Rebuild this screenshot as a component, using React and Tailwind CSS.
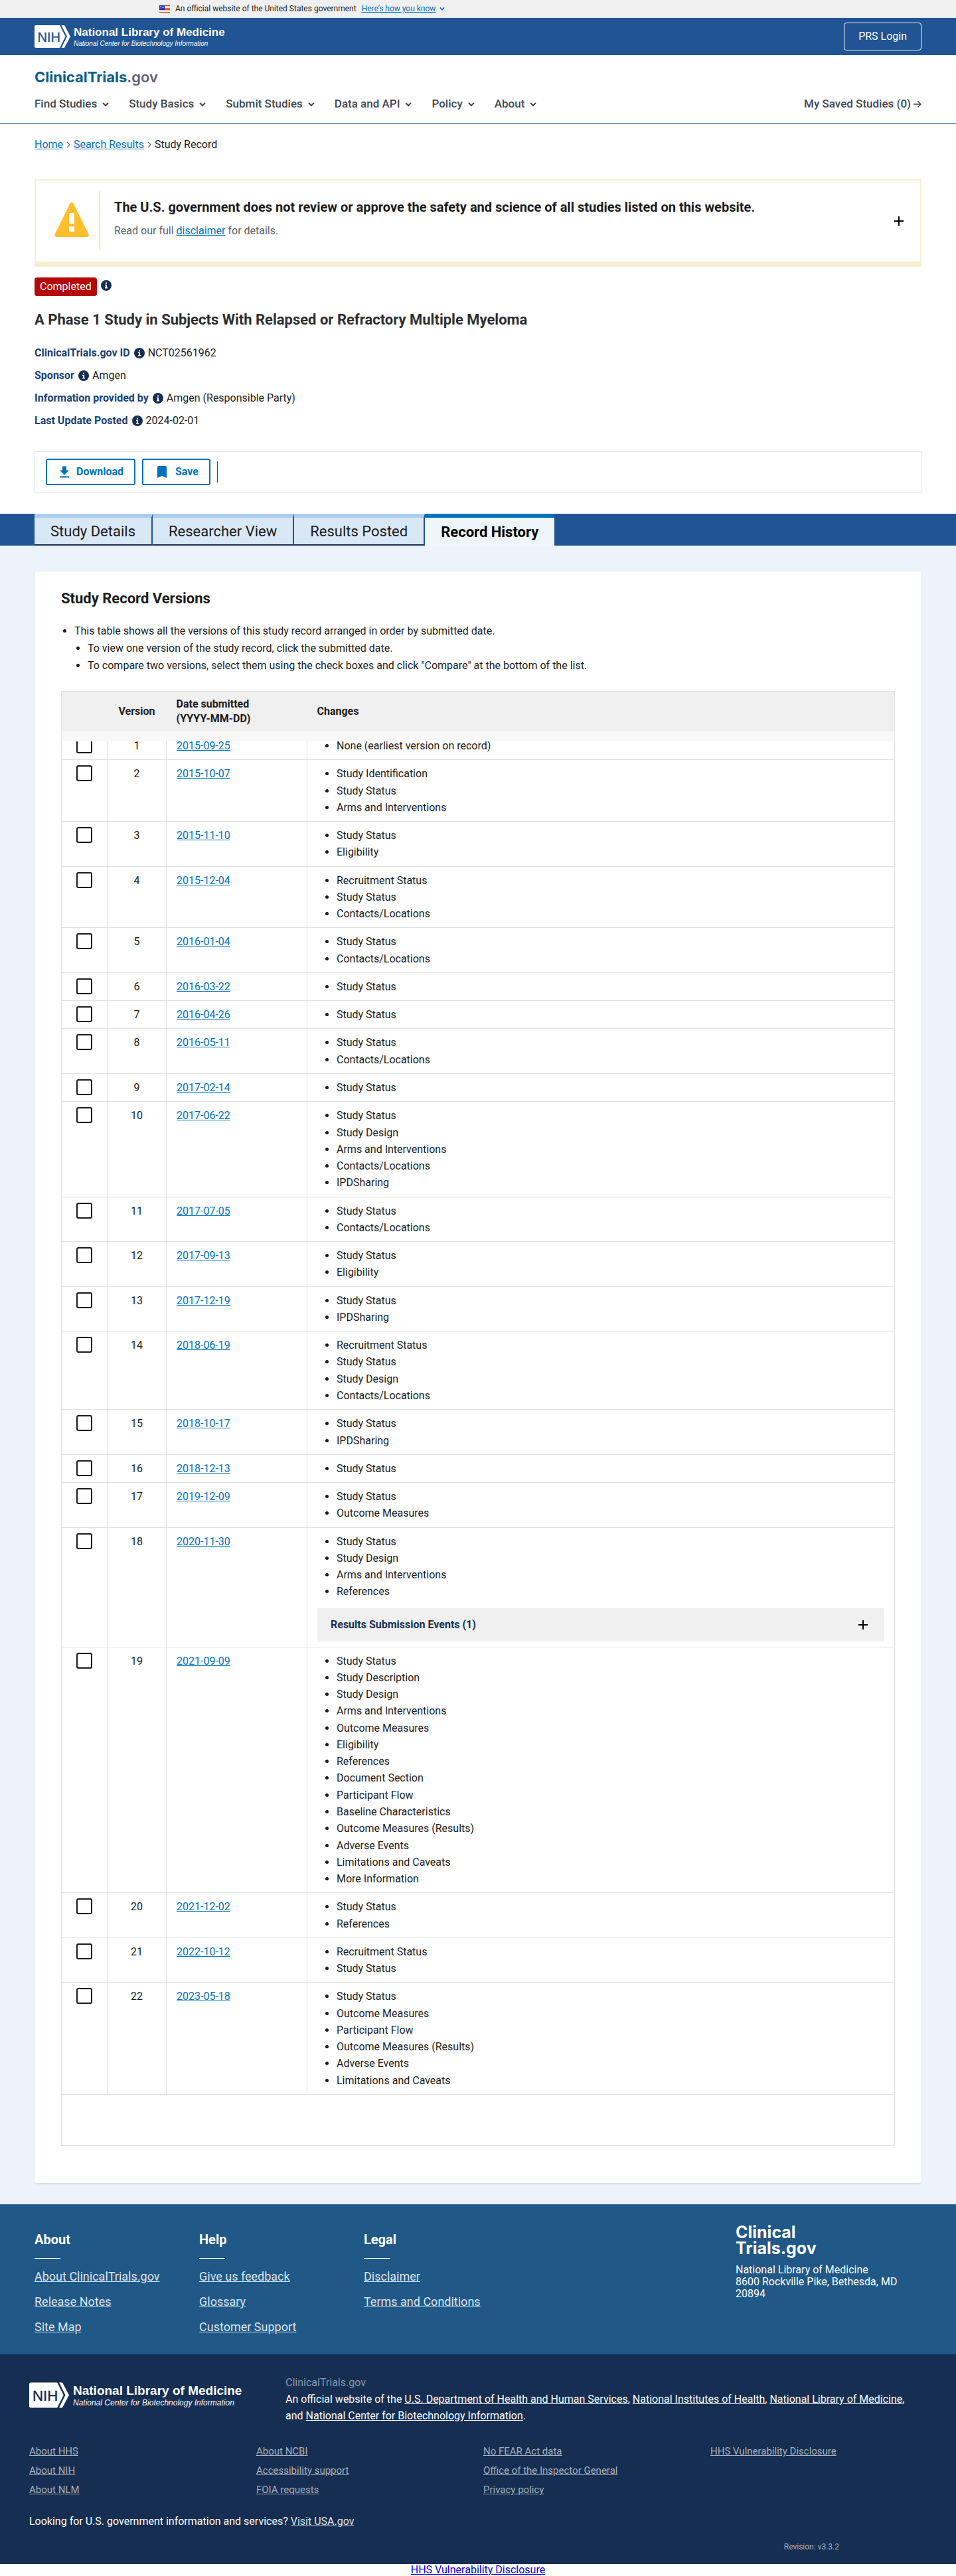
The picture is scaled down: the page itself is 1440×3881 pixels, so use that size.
import React from "react";

const NAV = ["Find Studies", "Study Basics", "Submit Studies", "Data and API", "Policy", "About"];

const S = "Study Status";
const C = "Contacts/Locations";
const A = "Arms and Interventions";

const VERSIONS = [
  ["2015-09-25", ["None (earliest version on record)"]],
  ["2015-10-07", ["Study Identification", S, A]],
  ["2015-11-10", [S, "Eligibility"]],
  ["2015-12-04", ["Recruitment Status", S, C]],
  ["2016-01-04", [S, C]],
  ["2016-03-22", [S]],
  ["2016-04-26", [S]],
  ["2016-05-11", [S, C]],
  ["2017-02-14", [S]],
  ["2017-06-22", [S, "Study Design", A, C, "IPDSharing"]],
  ["2017-07-05", [S, C]],
  ["2017-09-13", [S, "Eligibility"]],
  ["2017-12-19", [S, "IPDSharing"]],
  ["2018-06-19", ["Recruitment Status", S, "Study Design", C]],
  ["2018-10-17", [S, "IPDSharing"]],
  ["2018-12-13", [S]],
  ["2019-12-09", [S, "Outcome Measures"]],
  ["2020-11-30", [S, "Study Design", A, "References"], "Results Submission Events (1)"],
  [
    "2021-09-09",
    [
      S, "Study Description", "Study Design", A, "Outcome Measures", "Eligibility", "References",
      "Document Section", "Participant Flow", "Baseline Characteristics", "Outcome Measures (Results)",
      "Adverse Events", "Limitations and Caveats", "More Information",
    ],
  ],
  ["2021-12-02", [S, "References"]],
  ["2022-10-12", ["Recruitment Status", S]],
  [
    "2023-05-18",
    [S, "Outcome Measures", "Participant Flow", "Outcome Measures (Results)", "Adverse Events", "Limitations and Caveats"],
  ],
];

const FACTS = [
  ["ClinicalTrials.gov ID", "NCT02561962"],
  ["Sponsor", "Amgen"],
  ["Information provided by", "Amgen (Responsible Party)"],
  ["Last Update Posted", "2024-02-01"],
];

const FOOTER = [
  ["About", ["About ClinicalTrials.gov", "Release Notes", "Site Map"]],
  ["Help", ["Give us feedback", "Glossary", "Customer Support"]],
  ["Legal", ["Disclaimer", "Terms and Conditions"]],
];

const AGENCY = [
  ["About HHS", "About NIH", "About NLM"],
  ["About NCBI", "Accessibility support", "FOIA requests"],
  ["No FEAR Act data", "Office of the Inspector General", "Privacy policy"],
  ["HHS Vulnerability Disclosure"],
];

function Chevron({ className }) {
  return (
    <svg viewBox="0 0 10 10" className={className} fill="none" stroke="currentColor" strokeWidth="2" aria-hidden="true">
      <path d="M1 3l4 4 4-4" />
    </svg>
  );
}

function Plus() {
  return (
    <svg viewBox="0 0 14 14" className="size-3.5 shrink-0 text-black" fill="none" stroke="currentColor" strokeWidth="2" aria-hidden="true">
      <path d="M7 0v14M0 7h14" />
    </svg>
  );
}

function Info({ label }) {
  return (
    <button type="button" aria-label={label} className="size-4 shrink-0">
      <svg viewBox="0 0 16 16" className="size-4" aria-hidden="true">
        <circle cx="8" cy="8" r="8" fill="#162e51" />
        <path fill="#fff" d="M7 3.6h2v2H7zM6 6.7h3v4.4h1v1.3H6v-1.3h1V8H6z" />
      </svg>
    </button>
  );
}

function NihMark({ className, ink }) {
  return (
    <svg viewBox="0 0 54 34" className={className} aria-hidden="true">
      <path fill="#fff" d="M2 0h36l8.500 17L38 34H2a2 2 0 0 1-2-2V2a2 2 0 0 1 2-2z" />
      <path fill="#fff" d="M40.500 0h4.500l9 17-9 17h-4.500l8.500-17z" />
      <text x="4.500" y="24.500" fontFamily="Liberation Sans, Arial, sans-serif" fontSize="20" fill={ink} stroke={ink} strokeWidth="0.400">
        NIH
      </text>
    </svg>
  );
}

function Flag() {
  return (
    <svg viewBox="0 0 16 11" className="h-[11px] w-4" aria-hidden="true">
      <path fill="#fff" d="M0 0h16v11H0z" />
      <path fill="#db3e1f" d="M0 0h16v1H0zM0 2h16v1H0zM0 4h16v1H0zM0 6h16v1H0zM0 8h16v1H0zM0 10h16v1H0z" />
      <path fill="#1e33b1" d="M0 0h8v7H0z" />
      <path fill="#a5aee0" d="M1 1h1v1H1zM3 1h1v1H3zM5 1h1v1H5zM2 3h1v1H2zM4 3h1v1H4zM6 3h1v1H6zM1 5h1v1H1zM3 5h1v1H3zM5 5h1v1H5z" />
    </svg>
  );
}

function Header() {
  return (
    <header>
      <div className="flex h-[26px] items-center bg-[#f0f0f0] pl-[240px] text-[12px] text-[#1b1b1b]">
        <Flag />
        <span className="ml-2">An official website of the United States government</span>
        <button type="button" className="ml-2 flex items-center gap-1.5 text-[#0071bc]">
          <span className="underline">Here’s how you know</span>
          <Chevron className="size-2" />
        </button>
      </div>
      <div className="flex h-[57px] items-center justify-between border-t border-[#e1ecf5] bg-[#205493] px-[52px]">
        <a href="#nlm" className="flex gap-[5px] text-white">
          <NihMark className="h-[34px] w-[54px]" ink="#205493" />
          <span className="flex flex-col font-['Liberation_Sans',Arial,sans-serif]">
            <span className="text-[17px] leading-[22px] font-bold">National Library of Medicine</span>
            <span className="text-[10px] leading-3 italic">National Center for Biotechnology Information</span>
          </span>
        </a>
        <button type="button" className="h-[42px] rounded-sm border border-white px-[21px] text-white">
          PRS Login
        </button>
      </div>
      <div className="h-[104px] border-b border-[#1a4e75] px-[52px] pt-[18px]">
        <a href="#home" className="block font-[Inter,sans-serif] text-[22px] leading-[30px] font-bold text-[#0b5c87]">
          ClinicalTrials<span className="font-semibold text-[#5b616b]">.gov</span>
        </a>
        <nav className="mt-[14px] flex h-6 items-center justify-between text-[17px] font-medium text-[#43474f]">
          <ul className="flex gap-[30px]">
            {NAV.map((n) => (
              <li key={n}>
                <button type="button" className="flex items-center gap-2">
                  {n}
                  <Chevron className="size-2.5" />
                </button>
              </li>
            ))}
          </ul>
          <a href="#saved" className="flex items-center gap-1">
            My Saved Studies (0)
            <svg viewBox="0 0 12 12" className="size-3" fill="none" stroke="currentColor" strokeWidth="1.5" aria-hidden="true">
              <path d="M0 6h11M6.500 1.500L11 6l-4.500 4.500" />
            </svg>
          </a>
        </nav>
      </div>
    </header>
  );
}

function Crumb() {
  return (
    <svg viewBox="0 0 6 10" className="h-2.5 w-1.5 text-[#71767a]" fill="none" stroke="currentColor" strokeWidth="1.5" aria-hidden="true">
      <path d="M1 1l4 4-4 4" />
    </svg>
  );
}

function Summary() {
  return (
    <div className="px-[52px]">
      <nav aria-label="Breadcrumb" className="flex h-[62px] items-center gap-[5px]">
        <a href="#home" className="text-[#0071bc] underline">Home</a>
        <Crumb />
        <a href="#search" className="text-[#0071bc] underline">Search Results</a>
        <Crumb />
        <span>Study Record</span>
      </nav>

      <section className="mt-[21px] flex h-[132px] items-start justify-between border-2 border-b-8 border-[#f5f1d0] pr-[25px] pl-7">
        <div className="mt-4 flex items-stretch">
          <svg viewBox="0 0 52 52" className="mt-[17px] h-[52px] w-[52px]" aria-hidden="true">
            <path fill="#ffbe2e" d="M23.500 1.500a2.900 2.900 0 0 1 5 0l23 46.500a2.800 2.800 0 0 1-2.500 4H3a2.800 2.800 0 0 1-2.500-4z" />
            <path fill="#fff" d="M22 16h8v16h-8zM22 36h8v8h-8z" />
          </svg>
          <div className="ml-4 h-[88px] border-l border-[#ffbe2e] pt-2 pl-[21px]">
            <h4 className="text-[20px] leading-8 font-bold text-[#1b1b1b]">
              The U.S. government does not review or approve the safety and science of all studies listed on this website.
            </h4>
            <p className="mt-2 leading-6 text-[#5b616b]">
              Read our full <a href="#disclaimer" className="text-[#0071bc] underline">disclaimer</a> for details.
            </p>
          </div>
        </div>
        <button type="button" aria-label="Expand" className="mt-[54px]">
          <Plus />
        </button>
      </section>

      <div className="mt-4 flex items-start gap-1.5">
        <span className="rounded-sm bg-[#b50909] px-2 leading-7 text-white">Completed</span>
        <span className="flex pt-1"><Info label="About study status" /></span>
      </div>
      <h1 className="mt-5 text-[22px] leading-8 font-bold text-[#2d2e2f]">
        A Phase 1 Study in Subjects With Relapsed or Refractory Multiple Myeloma
      </h1>
      <dl className="mt-[22px] flex flex-col gap-2.5 leading-6">
        {FACTS.map(([k, v]) => (
          <div key={k} className="flex items-center gap-[5px]">
            <dt className="flex items-center gap-1.5 font-bold text-[#1a3f75]">
              {k}
              <Info label={"About " + k} />
            </dt>
            <dd>{v}</dd>
          </div>
        ))}
      </dl>
      <div className="mt-[34px] flex h-[62px] items-center border border-[#dfe1e2] px-4 font-bold text-[#0071bc]">
        <button type="button" className="flex h-10 items-center gap-1.5 rounded-[3px] border-2 border-[#0071bc] pr-4 pl-3.5">
          <svg viewBox="0 0 24 24" className="size-6" fill="currentColor" aria-hidden="true">
            <path d="M19 9.500h-4V3.500H9v6H5l7 7 7-7zM5 18.500v2h14v-2H5z" />
          </svg>
          Download
        </button>
        <button type="button" className="ml-2.5 flex h-10 items-center gap-2 rounded-[3px] border-2 border-[#0071bc] px-4">
          <svg viewBox="0 0 24 24" className="size-6" fill="currentColor" aria-hidden="true">
            <path d="M17 3H7c-1.100 0-2 .9-2 2v16l7-3 7 3V5c0-1.100-.9-2-2-2z" />
          </svg>
          Save
        </button>
        <span className="ml-2.5 h-8 border-l border-[#3d4551]" />
      </div>
    </div>
  );
}

function Tabs() {
  return (
    <div role="tablist" className="mt-8 flex h-12 bg-[#205493] px-[52px] text-[22px] text-[#1b1b1b]">
      {["Study Details", "Researcher View", "Results Posted"].map((t) => (
        <button key={t} role="tab" type="button" className="border-t-[6px] border-r-2 border-b-2 border-t-[#aacdec] border-r-[#205493] border-b-[#162e51] bg-[#d9e8f6] px-6">
          {t}
        </button>
      ))}
      <button role="tab" type="button" aria-selected="true" className="border-t-[6px] border-[#0071bc] bg-[#eef5fb] px-6 font-bold text-black">
        Record History
      </button>
    </div>
  );
}

const CELL = "border border-[#dfe1e2] px-[15px] py-2 align-top";

function History() {
  return (
    <main className="bg-[#ecf3fb] px-[52px] pt-[39px] pb-8">
      <section className="rounded-sm bg-white px-10 pt-[25px] pb-[56px] leading-[1.58] shadow-sm">
        <h2 className="text-[22px] leading-8 font-bold">Study Record Versions</h2>
        <ul className="mt-5 list-disc pl-5">
          <li className="leading-[26px]">
            This table shows all the versions of this study record arranged in order by submitted date.
            <ul className="list-disc pl-5">
              <li>To view one version of the study record, click the submitted date.</li>
              <li>To compare two versions, select them using the check boxes and click "Compare" at the bottom of the list.</li>
            </ul>
          </li>
        </ul>
        <div className="relative mt-[25px]">
          <table className="w-full table-fixed border-collapse">
            <colgroup>
              <col className="w-[69px]" />
              <col className="w-[89px]" />
              <col className="w-[212px]" />
              <col />
            </colgroup>
            <thead>
              <tr className="h-[61px] bg-[#f0f0f0] text-left leading-[22px]">
                <th aria-label="Select" className="border border-r-0 border-[#dfe1e2]" />
                <th className="border-y border-[#dfe1e2] text-center">Version</th>
                <th className="border-y border-[#dfe1e2] px-[15px]">Date submitted<br />(YYYY-MM-DD)</th>
                <th className="border border-l-0 border-[#dfe1e2] px-[15px]">Changes</th>
              </tr>
            </thead>
            <tbody>
              {VERSIONS.map(([date, items, events], i) => (
                <tr key={date}>
                  <td className={CELL}>
                    <input type="checkbox" aria-label={"Select version " + (i + 1)} className="mx-auto block size-6 appearance-none rounded-[3px] border-2 border-[#1b1b1b] bg-white" />
                  </td>
                  <td className={CELL + " text-center"}>{i + 1}</td>
                  <td className={CELL}>
                    <a href={"#" + date} className="text-[#0071bc] underline">{date}</a>
                  </td>
                  <td className={CELL}>
                    <ul className="list-disc pl-[29px]">
                      {items.map((t) => (
                        <li key={t}>{t}</li>
                      ))}
                    </ul>
                    {events && (
                      <button type="button" className="mt-3 flex h-[50px] w-full items-center justify-between bg-[#f0f0f0] pr-[25px] pl-5 font-bold text-[#162e51]">
                        {events}
                        <Plus />
                      </button>
                    )}
                  </td>
                </tr>
              ))}
              <tr className="h-[77px]">
                <td colSpan={4} className={CELL} />
              </tr>
            </tbody>
          </table>
          <div className="absolute inset-x-0 top-[61px] h-[15px] border-x border-[#ececec] bg-[#f8f8f8]" />
        </div>
      </section>
    </main>
  );
}

function Footer() {
  return (
    <footer>
      <div className="flex bg-[#205887] px-[52px] pt-[26px] pb-[22px] text-white">
        {FOOTER.map(([title, links]) => (
          <div key={title} className="w-[248px] pt-[15px]">
            <h3 className="text-[20px] leading-6 font-bold">{title}</h3>
            <div className="mt-4 w-[39px] border-t border-white" />
            <ul className="mt-2 text-[18px] leading-[38px] text-[#dce4ef]">
              {links.map((l) => (
                <li key={l}><a href="#footer" className="underline">{l}</a></li>
              ))}
            </ul>
          </div>
        ))}
        <div className="ml-auto w-[280px] pt-1">
          <p className="font-[Inter,sans-serif] text-[25px] leading-6 font-bold">Clinical<br />Trials.gov</p>
          <address className="mt-3 pr-8 leading-[18px] not-italic">
            National Library of Medicine<br />8600 Rockville Pike, Bethesda, MD 20894
          </address>
        </div>
      </div>
      <div className="bg-[#162e51] px-11 pt-[30px] text-white">
        <div className="flex">
          <a href="#nlm" className="mt-3 flex w-[386px] shrink-0 gap-1.5">
            <NihMark className="h-[39px] w-[60px]" ink="#162e51" />
            <span className="flex flex-col font-['Liberation_Sans',Arial,sans-serif]">
              <span className="text-[19px] leading-[25px] font-bold">National Library of Medicine</span>
              <span className="text-[12px] leading-3 italic">National Center for Biotechnology Information</span>
            </span>
          </a>
          <div className="leading-[25px]">
            <p className="text-[#8b98ab]">ClinicalTrials.gov</p>
            <p>
              An official website of the <a href="#hhs" className="underline">U.S. Department of Health and Human Services</a>,{" "}
              <a href="#nih" className="underline">National Institutes of Health</a>,{" "}
              <a href="#nlm" className="underline">National Library of Medicine</a>,<br />and{" "}
              <a href="#ncbi" className="underline">National Center for Biotechnology Information</a>.
            </p>
          </div>
        </div>
        <div className="mt-[27px] -mr-4 grid grid-cols-4 text-[15px] leading-[29px] text-[#a9b1bc]">
          {AGENCY.map((col) => (
            <ul key={col[0]}>
              {col.map((l) => (
                <li key={l}><a href="#agency" className="underline">{l}</a></li>
              ))}
            </ul>
          ))}
        </div>
        <p className="mt-[21px] leading-6">
          Looking for U.S. government information and services? <a href="#usa" className="text-[#dce4ef] underline">Visit USA.gov</a>
        </p>
        <p className="mt-4 pr-[132px] pb-4 text-right text-[12px] leading-5 text-[#a9b1bc]">Revision: v3.3.2</p>
      </div>
      <p className="text-center leading-[18px]">
        <a href="#vulnerability" className="text-[#0000ee] underline">HHS Vulnerability Disclosure</a>
      </p>
    </footer>
  );
}

export default function App() {
  return (
    <div className="bg-white font-[Roboto,sans-serif] text-base text-[#1b1b1b]">
      <Header />
      <Summary />
      <Tabs />
      <History />
      <Footer />
    </div>
  );
}
